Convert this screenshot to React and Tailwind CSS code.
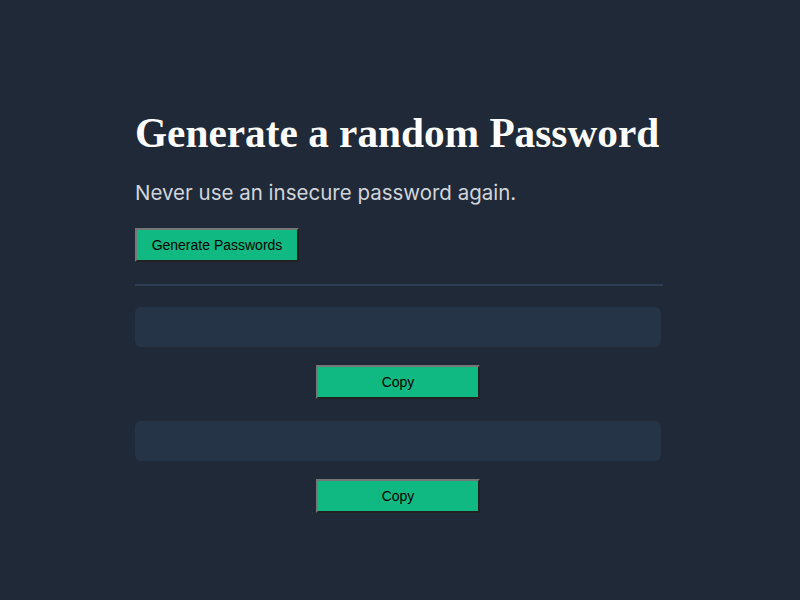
export default function App() {
  const btn =
    "w-[164px] h-[34px] bg-[#10b981] text-black text-[14px] border-2 [border-style:outset] border-[#767676] flex items-center justify-center font-['Liberation_Sans',Arial,sans-serif]";
  return (
    <div className="min-h-[600px] bg-[#1f2937] px-[135px] pt-[109px] font-['Liberation_Sans',Arial,sans-serif]">
      <div className="w-[528px] flex flex-col">
        <h1 className="font-['Liberation_Serif','Times_New_Roman',serif] font-bold text-[41.3px] leading-[48px] text-white whitespace-nowrap">
          Generate a random Password
        </h1>
        <p className="mt-[22px] text-[20.5px] leading-[28px] text-[#d1d5db] font-['Inter',sans-serif] whitespace-nowrap">
          Never use an insecure password again.
        </p>
        <button className={btn + " mt-[21px] w-[163px]"}>Generate Passwords</button>
        <div className="mt-[22px] h-[2px] bg-[#2e3d52]" />
        <div className="mt-[21px] w-[526px] h-[40px] rounded-md bg-[#263447]" />
        <div className="w-[526px] flex justify-center mt-[18px]">
          <button className={btn}>Copy</button>
        </div>
        <div className="mt-[22px] w-[526px] h-[40px] rounded-md bg-[#263447]" />
        <div className="w-[526px] flex justify-center mt-[18px]">
          <button className={btn}>Copy</button>
        </div>
      </div>
    </div>
  );
}
